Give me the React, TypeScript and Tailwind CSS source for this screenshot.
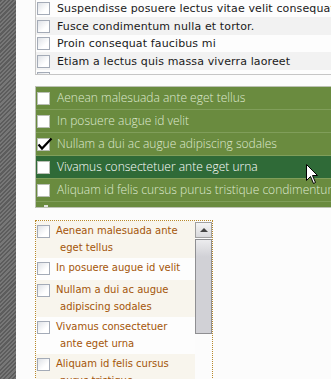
import React from "react";

const Box = () => (
  <div className="w-[13px] h-[13px] shrink-0 border border-[#a4abb7] bg-[linear-gradient(135deg,#dfe2e7,#ffffff_65%)]" />
);

const list1 = [
  { t: "Suspendisse posuere lectus vitae velit consequat", h: "h-[17px]", bg: "bg-[#fdfdfd]" },
  { t: "Fusce condimentum nulla et tortor.", h: "h-[18px]", bg: "bg-[#f2f2f2]" },
  { t: "Proin consequat faucibus mi", h: "h-[17px]", bg: "bg-[#fdfdfd]" },
  { t: "Etiam a lectus quis massa viverra laoreet", h: "h-[18px]", bg: "bg-[#f2f2f2]" },
];

const list2 = [
  { t: "Aenean malesuada ante eget tellus", checked: false, dark: false },
  { t: "In posuere augue id velit", checked: false, dark: false },
  { t: "Nullam a dui ac augue adipiscing sodales", checked: true, dark: false },
  { t: "Vivamus consectetuer ante eget urna", checked: false, dark: true },
  { t: "Aliquam id felis cursus purus tristique condimentum", checked: false, dark: false },
];

const list3 = [
  { t: "Aenean malesuada ante eget tellus", bg: "bg-[#f8f5ed]" },
  { t: "In posuere augue id velit", bg: "bg-[#fdfdfd]" },
  { t: "Nullam a dui ac augue adipiscing sodales", bg: "bg-[#f8f5ed]" },
  { t: "Vivamus consectetuer ante eget urna", bg: "bg-[#fdfdfd]" },
  { t: "Aliquam id felis cursus purus tristique", bg: "bg-[#f8f5ed]" },
];

export default function App() {
  return (
    <div className="relative w-[331px] h-[379px] overflow-hidden flex bg-[#fcfcfc]">
      <div className="w-[16px] shrink-0 bg-[image:repeating-linear-gradient(135deg,#5c5c5c_0px,#5c5c5c_1.5px,#777777_1.5px,#777777_3px)]" />
      <div className="flex-1 min-w-0 pl-[19px] flex flex-col">
        {/* list 1 */}
        <div className="w-[330px] shrink-0 border-l border-b border-[#c6c6c6] font-['DejaVu_Sans',sans-serif] text-[11px] tracking-[0.13px] text-[#1a1a1a]">
          {list1.map((r) => (
            <div key={r.t} className={`${r.h} ${r.bg} flex items-center pl-[1px] whitespace-nowrap`}>
              <Box />
              <span className="ml-[7px] leading-none">{r.t}</span>
            </div>
          ))}
          <div className="h-[4px] bg-[#fdfdfd] pl-[1px] pt-[2px] overflow-hidden">
            <Box />
          </div>
        </div>

        {/* list 2 */}
        <div className="mt-[11px] w-[330px] shrink-0 border-l border-t border-b border-[#bcc2b4] font-['Open_Sans',sans-serif] font-light text-[12px] whitespace-nowrap">
          {list2.map((r) => (
            <div
              key={r.t}
              className={`h-[23px] flex items-center pl-[1px] border-b border-[#809e5a] ${
                r.dark ? "bg-[#2f6a37] text-white" : "bg-[#6a8b3f] text-[#dfe9d0]"
              }`}
            >
              <div className="relative">
                <div className="w-[13px] h-[13px] border border-[#b9bfb4] bg-white" />
                {r.checked && (
                  <svg className="absolute left-[0px] top-[-1px]" width="16" height="14" viewBox="0 0 16 14">
                    <path d="M1.5 7.5 L5 11.5 L14.5 1.5" fill="none" stroke="#000" strokeWidth="2.2" />
                  </svg>
                )}
              </div>
              <span className="ml-[7px] leading-none">{r.t}</span>
            </div>
          ))}
          <div className="h-[5px] bg-[#6a8b3f] pl-[8px] overflow-hidden">
            <div className="mt-[3px] w-[4px] h-[2px] bg-[#dfe3da]" />
          </div>
        </div>

        {/* list 3 */}
        <div className="mt-[12px] w-[178px] h-[200px] shrink-0 flex border border-dotted border-[#b8892a] font-['DejaVu_Sans',sans-serif] text-[10px] text-[#a4560a]">
          <div className="w-[159px] flex flex-col">
            {list3.map((r) => (
              <div key={r.t} className={`${r.bg} flex items-start min-h-[22px] py-[2px] pl-[1px]`}>
                <div className="mt-[2px]">
                  <Box />
                </div>
                <span className="ml-[6px] pl-[4px] -indent-[4px] leading-[16.5px] pr-[2px]">{r.t}</span>
              </div>
            ))}
          </div>
          <div className="w-[17px] flex flex-col pt-[1px]">
            <div className="h-[16px] border border-[#a0a0a0] bg-[linear-gradient(#f4f4f4,#d9d9dc)] flex items-center justify-center">
              <div className="w-0 h-0 border-l-[4px] border-r-[4px] border-b-[4px] border-l-transparent border-r-transparent border-b-[#444]" />
            </div>
            <div className="mt-[1px] h-[95px] border border-[#8f8f92] bg-[linear-gradient(#ececee,#d1d1d6_18%,#d1d1d6)]" />
          </div>
        </div>
      </div>

      {/* cursor */}
      <svg className="absolute left-[306px] top-[164px]" width="13" height="21" viewBox="0 0 13 21">
        <path d="M0.5 0.5 L0.5 16.5 L4.5 12.5 L7.5 19.5 L9.5 18.5 L6.5 11.5 L11.5 11.5 Z" fill="#fff" stroke="#000" strokeWidth="1" />
      </svg>
    </div>
  );
}
